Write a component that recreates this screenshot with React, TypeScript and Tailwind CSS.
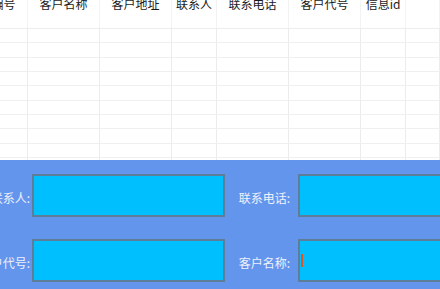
import React from "react";

const columns = ["客户编号", "客户名称", "客户地址", "联系人", "联系电话", "客户代号", "信息id", ""];
const gridCols = "grid grid-cols-[72px_72px_72px_45px_72px_72px_45px_1fr]";

function FieldLabel({ text, className }: { text: string; className: string }) {
  return (
    <div className={`flex shrink-0 justify-end pt-[4px] text-[12px] text-[#eef2fb] whitespace-nowrap ${className}`}>
      {text}
    </div>
  );
}

function Field({ width, caret }: { width: string; caret?: boolean }) {
  return (
    <div className={`relative h-[43px] shrink-0 border-2 border-[#5d7d98] bg-[#00bfff] ${width}`}>
      {caret && <span className="absolute left-[1px] top-[13px] h-[13px] w-[2px] bg-[#e2521d]" />}
    </div>
  );
}

export default function App() {
  const rows = Array.from({ length: 10 });

  return (
    <div
      className="w-[440px] h-[289px] overflow-hidden bg-white flex flex-col"
      style={{ fontFamily: '"Noto Sans CJK SC", "Noto Sans", sans-serif' }}
    >
      {/* grid, scrolled a bit to the right and down */}
      <div className="h-[160px] shrink-0 overflow-hidden">
        <div className="ml-[-44px] w-[484px]">
          <div className={`${gridCols} h-[29px] border-b border-[#ededed]`}>
            {columns.map((c, i) => (
              <div key={i} className="flex justify-center border-r border-[#f3f3f3] overflow-hidden">
                <span className="-mt-[2px] leading-[12px] text-[12px] text-[#1a1a1a] whitespace-nowrap">{c}</span>
              </div>
            ))}
          </div>
          {rows.map((_, r) => (
            <div key={r} className={`${gridCols} h-[14.33px] border-b border-[#efefef]`}>
              {columns.map((_, i) => (
                <div key={i} className="border-r border-[#ececec]" />
              ))}
            </div>
          ))}
        </div>
      </div>

      {/* edit panel */}
      <div className="flex-1 overflow-hidden bg-[#6495ed] pt-[14px] flex flex-col gap-[22px]">
        <div className="flex items-center">
          <FieldLabel text="联系人:" className="w-[80px] ml-[-50px] mr-[2px]" />
          <Field width="w-[193px]" />
          <FieldLabel text="联系电话:" className="w-[65px] mr-[8px]" />
          <Field width="w-[193px]" />
        </div>
        <div className="flex items-center">
          <FieldLabel text="客户代号:" className="w-[80px] ml-[-50px] mr-[2px]" />
          <Field width="w-[193px]" />
          <FieldLabel text="客户名称:" className="w-[65px] mr-[8px]" />
          <Field width="w-[193px]" caret />
        </div>
      </div>
    </div>
  );
}
